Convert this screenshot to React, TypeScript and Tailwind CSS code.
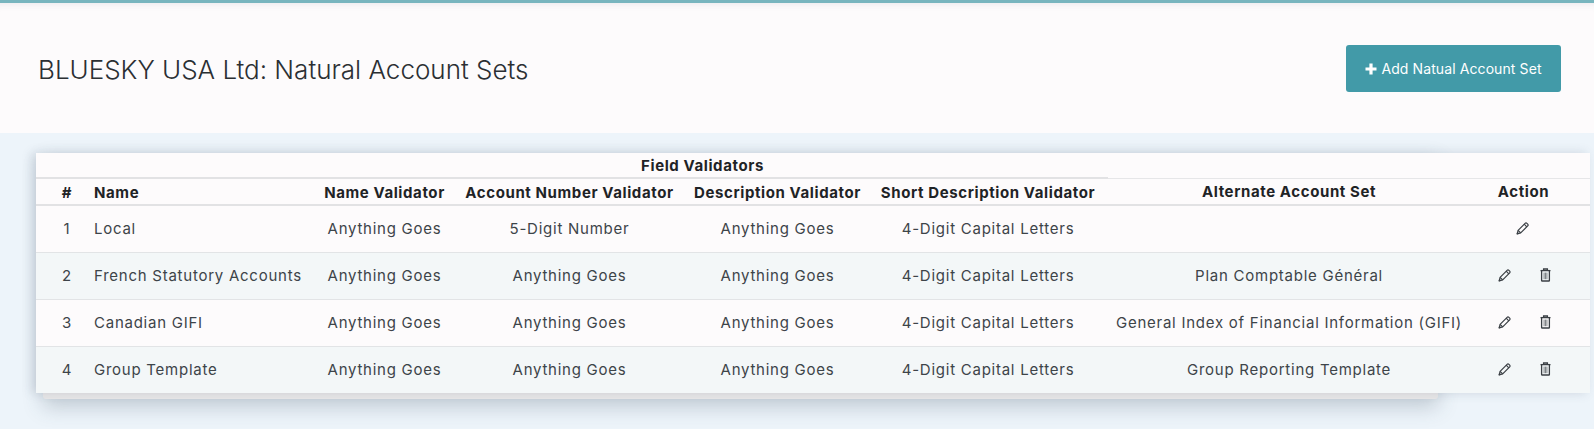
const ROWS = [
  { id: 1, name: "Local", account: "5-Digit Number", alternate: "", canDelete: false },
  { id: 2, name: "French Statutory Accounts", account: "Anything Goes", alternate: "Plan Comptable Général", canDelete: true },
  { id: 3, name: "Canadian GIFI", account: "Anything Goes", alternate: "General Index of Financial Information (GIFI)", canDelete: true },
  { id: 4, name: "Group Template", account: "Anything Goes", alternate: "Group Reporting Template", canDelete: true },
];

function PlusIcon() {
  return (
    <svg viewBox="0 0 12 12" className="h-[12px] w-[12px]" fill="currentColor" aria-hidden="true">
      <path d="M4.4 0.5h3.2v3.9h3.9v3.2H7.6v3.9H4.4V7.6H0.5V4.4h3.9z" />
    </svg>
  );
}

function PencilIcon() {
  return (
    <svg viewBox="0 0 14 14" className="h-[14px] w-[14px]" fill="none" stroke="currentColor" strokeWidth="1.2" strokeLinejoin="round" aria-hidden="true">
      <path d="M1.2 12.8l.9-3.5 7-7c.5-.5 1.3-.5 1.8 0l.8.8c.5.5.5 1.3 0 1.8l-7 7z" />
      <path d="M2.1 9.3l2.6 2.6M8.2 3.2l2.6 2.6" />
      <path d="M1.2 12.8l1-.3-.7-.7z" fill="currentColor" />
    </svg>
  );
}

function TrashIcon() {
  return (
    <svg viewBox="0 0 11 14" className="h-[14px] w-[11px]" fill="none" stroke="currentColor" aria-hidden="true">
      <path d="M0.5 2.6h10" strokeWidth="1.3" />
      <path d="M3.6 2.4V1h3.8v1.4" strokeWidth="1.3" />
      <path d="M1.6 3v9.4c0 .4.2.6.6.6h6.6c.4 0 .6-.2.6-.6V3" strokeWidth="1.3" />
      <path d="M4.1 4.6v6.6M5.5 4.6v6.6M6.9 4.6v6.6" strokeWidth="0.9" opacity="0.7" />
    </svg>
  );
}

export default function App() {
  return (
    <div className="h-[429px] overflow-hidden bg-[#edf4fa] font-['Inter','Liberation_Sans',sans-serif] text-[#3d4449]">
      <div className="h-[133px] border-t-[3px] border-[#78b5be] bg-[#fdfbfc] shadow-[inset_0_8px_8px_-8px_rgba(60,60,70,0.12)]">
        <div className="flex items-center justify-between pl-[38px] pr-[33px] pt-[42px]">
          <h1 className="pt-[2px] text-[26px] font-light leading-[44px] text-[#2b2f33]">BLUESKY USA Ltd: Natural Account Sets</h1>
          <button className="flex h-[47px] w-[215px] items-center justify-center gap-[4px] rounded-[3px] bg-[#429aa8] text-[14px] tracking-[0.1px] text-white">
            <PlusIcon />
            Add Natual Account Set
          </button>
        </div>
      </div>
      <div className="ml-[43px] mt-[20px] w-[1395px] rounded-b-[3px] bg-[#e9e8e9] pb-[6px] shadow-[0_8px_20px_rgba(60,80,100,0.25)]">
        <table className="-ml-[7px] w-[1554px] table-fixed border-collapse bg-[#fdfbfc] text-[15px] tracking-[0.75px] shadow-[-4px_0_10px_rgba(60,80,100,0.18)]">
          <colgroup>
            <col className="w-[46px]" />
            <col className="w-[230px]" />
            <col className="w-[145px]" />
            <col className="w-[225px]" />
            <col className="w-[191px]" />
            <col className="w-[235px]" />
            <col className="w-[367px]" />
            <col className="w-[115px]" />
          </colgroup>
          <thead className="font-bold leading-[20px] tracking-[0.6px] text-[#1f2326]">
            <tr className="h-[25px]">
              <th colSpan={6} className="border-b-2 border-[#e2e2e4] pl-[276px] pr-[15px] pt-[2px] text-center">Field Validators</th>
              <th colSpan={2} className="border-b border-[#e6e6e8]"></th>
            </tr>
            <tr className="h-[27px] border-b-2 border-[#e2e2e4]">
              <th className="pl-[16px] pt-[2px] text-center">#</th>
              <th className="pl-[12px] pt-[2px] text-left">Name</th>
              <th className="pt-[2px] text-center">Name Validator</th>
              <th className="pt-[2px] text-center">Account Number Validator</th>
              <th className="pt-[2px] text-center">Description Validator</th>
              <th className="pr-[5px] pt-[2px] text-center">Short Description Validator</th>
              <th className="pr-[5px] pt-[2px] text-center">Alternate Account Set</th>
              <th className="pr-[18px] pt-[2px] text-center">Action</th>
            </tr>
          </thead>
          <tbody>
            {ROWS.map((row) => (
              <tr key={row.id} className="h-[47px] border-b border-[#e2e4e6] last:border-b-0 even:bg-[#f3f7f8]">
                <td className="pl-[16px] pt-[1px] text-center">{row.id}</td>
                <td className="pl-[12px] pt-[1px] text-left">{row.name}</td>
                <td className="pt-[1px] text-center">Anything Goes</td>
                <td className="pt-[1px] text-center">{row.account}</td>
                <td className="pt-[1px] text-center">Anything Goes</td>
                <td className="pr-[5px] pt-[1px] text-center">4-Digit Capital Letters</td>
                <td className="pr-[5px] pt-[1px] text-center">{row.alternate}</td>
                <td className="pb-[1px] pr-[19px]">
                  {row.canDelete ? (
                    <div className="ml-[3px] flex items-center justify-center gap-[28px] text-[#3a3f44]">
                      <PencilIcon />
                      <TrashIcon />
                    </div>
                  ) : (
                    <div className="flex justify-center text-[#3a3f44]">
                      <PencilIcon />
                    </div>
                  )}
                </td>
              </tr>
            ))}
          </tbody>
        </table>
      </div>
    </div>
  );
}
